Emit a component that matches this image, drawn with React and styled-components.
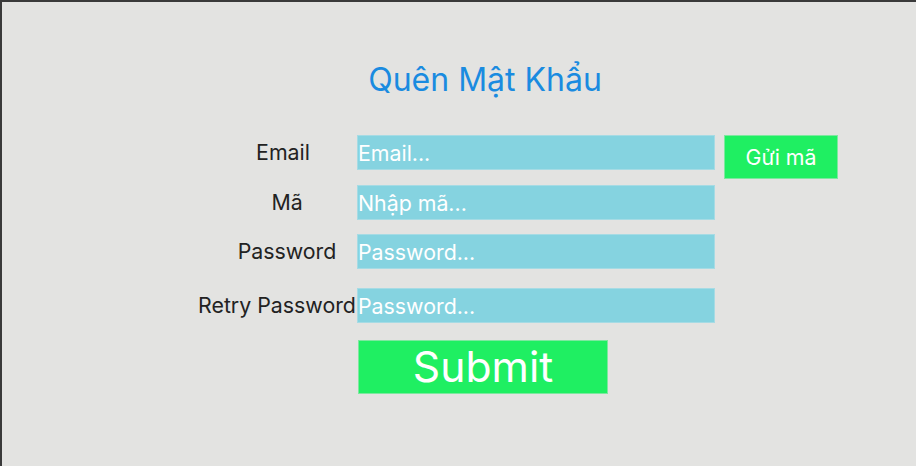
import React from 'react'
import styled, { createGlobalStyle } from 'styled-components'

const Global = createGlobalStyle`
  html, body {
    margin: 0;
    padding: 0;
    background: #e3e3e1;
  }
  * {
    box-sizing: border-box;
  }
`

const Page = styled.div`
    height: 466px;
    border-top: 2px solid #3a3a3a;
    border-left: 2px solid #3a3a3a;
    background: #e3e3e1;
    font-family: Inter, "Noto Sans", sans-serif;
    padding: 58px 0 0 195px;
`

const Title = styled.h1`
    width: 576px;
    margin: 0 0 36px 0;
    text-align: center;
    font-size: 32px;
    font-weight: 400;
    line-height: 39px;
    color: #1a8be0;
`

const Form = styled.form`
    display: flex;
    flex-direction: column;
`

const Row = styled.div`
    display: flex;
    align-items: flex-start;
    margin-top: ${p => p.space || 0}px;
`

const Label = styled.label`
    width: 160px;
    height: 35px;
    line-height: 35px;
    padding-left: ${p => p.nudge || 0}px;
    text-align: center;
    font-size: 21.33px;
    color: #222;
    white-space: nowrap;
`

const Input = styled.input`
    width: 358px;
    height: 35px;
    padding: 0;
    margin: 0;
    border: 1px solid #a6dbe4;
    background: #85d3e0;
    color: #fff;
    font-family: Inter, "Noto Sans", sans-serif;
    font-size: 21.33px;
    outline: none;

    &::placeholder {
        color: #fff;
        opacity: 1;
    }
`

const SendButton = styled.button`
    width: 114px;
    height: 44px;
    margin-left: 9px;
    padding: 0;
    border: 1px solid #7de89f;
    background: #1fef62;
    color: #fff;
    font-family: Inter, "Noto Sans", sans-serif;
    font-size: 21.33px;
    cursor: pointer;
`

const SubmitButton = styled.button`
    width: 250px;
    height: 54px;
    margin: 17px 0 0 161px;
    padding: 0;
    border: 1px solid #7de89f;
    background: #1fef62;
    color: #fff;
    font-family: Inter, "Noto Sans", sans-serif;
    font-size: 42.67px;
    line-height: 1;
    cursor: pointer;
`

const App = () => {
  return (
    <Page>
      <Global />
      <Title>Quên Mật Khẩu</Title>
      <Form onSubmit={e => e.preventDefault()}>
        <Row>
          <Label nudge={12}>Email</Label>
          <Input type="email" placeholder="Email..." />
          <SendButton type="button">Gửi mã</SendButton>
        </Row>
        <Row space={6}>
          <Label nudge={20}>Mã</Label>
          <Input type="text" placeholder="Nhập mã..." />
        </Row>
        <Row space={14}>
          <Label nudge={20}>Password</Label>
          <Input type="password" placeholder="Password..." />
        </Row>
        <Row space={19}>
          <Label>Retry Password</Label>
          <Input type="password" placeholder="Password..." />
        </Row>
        <SubmitButton type="submit">Submit</SubmitButton>
      </Form>
    </Page>
  )
}

export default App
